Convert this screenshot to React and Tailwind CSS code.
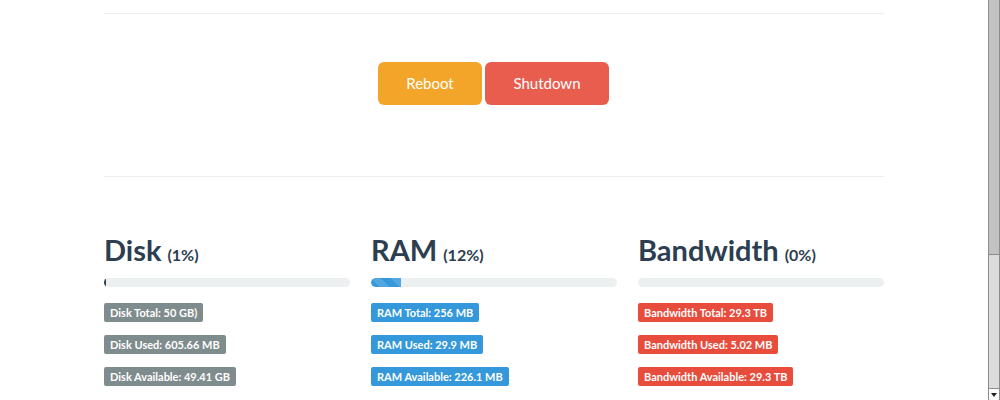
import React from "react";

const stats = [
  {
    title: "Disk",
    pct: 1,
    bar: "bg-[#2c3e50]",
    badge: "bg-[#7f8c8d]",
    items: ["Disk Total: 50 GB)", "Disk Used: 605.66 MB", "Disk Available: 49.41 GB"],
  },
  {
    title: "RAM",
    pct: 12,
    bar: "bg-[#3498db] bg-[linear-gradient(45deg,rgba(255,255,255,0.15)_25%,transparent_25%,transparent_50%,rgba(255,255,255,0.15)_50%,rgba(255,255,255,0.15)_75%,transparent_75%,transparent)] bg-[length:20px_20px]",
    badge: "bg-[#3498db]",
    items: ["RAM Total: 256 MB", "RAM Used: 29.9 MB", "RAM Available: 226.1 MB"],
  },
  {
    title: "Bandwidth",
    pct: 0,
    bar: "bg-[#e74c3c]",
    badge: "bg-[#e74c3c]",
    items: ["Bandwidth Total: 29.3 TB", "Bandwidth Used: 5.02 MB", "Bandwidth Available: 29.3 TB"],
  },
];

const StatColumn = ({ stat }) => (
  <div className="flex flex-col">
    <h2 className="text-[29px] leading-[36px] font-bold text-[#2c3e50]">
      {stat.title}
      <small className="ml-[6px] text-[16px] font-bold">({stat.pct}%)</small>
    </h2>
    <div className="mt-[5px] h-[9px] w-full rounded-full bg-[#ecf0f1] overflow-hidden">
      <div
        className={"h-full rounded-l-full " + stat.bar}
        style={{ width: stat.pct === 0 ? 0 : Math.max(stat.pct, 1) + "%" }}
      />
    </div>
    <div className="mt-[16px] flex flex-col items-start gap-[13px]">
      {stat.items.map((t) => (
        <span
          key={t}
          className={"rounded-[2px] px-[6px] h-[19px] leading-[19px] text-[11px] font-bold text-white " + stat.badge}
        >
          {t}
        </span>
      ))}
    </div>
  </div>
);

const Scrollbar = () => (
  <div className="w-[12px] h-[400px] flex flex-col bg-[#dcdcdc] border-x border-[#8c8c8c]">
    <div className="h-[255px] bg-[#c2c2c2] border-b border-[#8c8c8c]" />
    <div className="flex-1" />
    <div className="h-[12px] bg-white border-t border-[#8c8c8c] rounded-b-[2px] flex items-center justify-center">
      <svg width="6" height="4" viewBox="0 0 6 4">
        <path d="M0 0h6L3 4z" fill="#222" />
      </svg>
    </div>
  </div>
);

export default function App() {
  return (
    <div className="flex w-[1000px] h-[400px] overflow-hidden bg-white font-['Lato',sans-serif]">
      <div className="flex-1">
        <div className="w-[780px] mx-auto">
          <div className="mt-[13px] border-t border-[#eeeeee]" />
          <div className="mt-[48px] flex pl-[274px] gap-[3px]">
            <button className="w-[104px] h-[43px] rounded-[6px] bg-[#f3a52a] text-white text-[15px]">Reboot</button>
            <button className="w-[124px] h-[43px] rounded-[6px] bg-[#e95d4f] text-white text-[15px]">Shutdown</button>
          </div>
          <div className="mt-[71px] border-t border-[#eeeeee]" />
          <div className="mt-[55px] grid grid-cols-3 gap-[21px]">
            {stats.map((s) => (
              <StatColumn key={s.title} stat={s} />
            ))}
          </div>
        </div>
      </div>
      <Scrollbar />
    </div>
  );
}
